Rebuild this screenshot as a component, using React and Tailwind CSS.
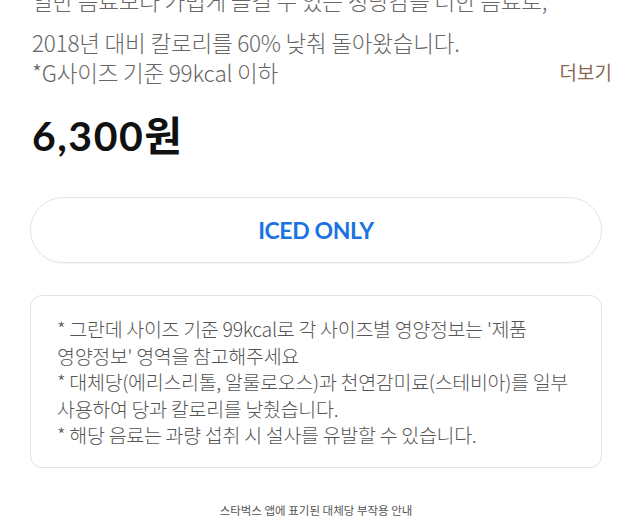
export default function App() {
  const kr = "font-['Noto_Sans_CJK_KR',sans-serif]"

  return (
    <div className={`w-[632px] h-[532px] overflow-hidden bg-white break-keep ${kr}`}>
      {/* description */}
      <div className="relative px-[32px]">
        <div className="h-[20px] overflow-hidden">
          <p className="-mt-[15px] text-[22.5px] leading-[30px] font-light text-[#666] tracking-[-0.2px] whitespace-nowrap">
            일반 음료보다 가볍게 즐길 수 있는 청량감을 더한 음료로,
          </p>
        </div>
        <p className="mt-[7px] text-[22.5px] leading-[30px] font-light text-[#666] tracking-[-0.2px]">
          2018년 대비 칼로리를 60% 낮춰 돌아왔습니다.
        </p>
        <div className="flex items-center justify-between">
          <p className="text-[22.5px] leading-[30px] font-light text-[#666] tracking-[-0.2px]">
            *G사이즈 기준 99kcal 이하
          </p>
          <span className="mr-[-12px] text-[19px] leading-[30px] text-[#8b6a52]">더보기</span>
        </div>
      </div>

      {/* price */}
      <div className="mt-[25px] px-[32px]">
        <p className="font-['Lato','Noto_Sans_CJK_KR',sans-serif] text-[41px] leading-[48px] font-bold text-[#111] tracking-[1.5px]">
          6,300원
        </p>
      </div>

      {/* option */}
      <div className="mt-[37px] px-[30px]">
        <div className="flex h-[66px] items-center justify-center rounded-full border border-[#e3e3e3] shadow-[0_1px_2px_rgba(0,0,0,0.04)]">
          <span className="font-['Lato',sans-serif] text-[23px] font-bold text-[#1a73e0] tracking-[-0.4px]">
            ICED ONLY
          </span>
        </div>
      </div>

      {/* notice */}
      <div className="mt-[32px] px-[30px]">
        <div className="rounded-[12px] border border-[#e3e3e3] pl-[26px] pr-[22px] pt-[20px] pb-[18px] text-[19.5px] leading-[26.5px] font-light text-[#555] tracking-[-0.3px]">
          <p>* 그란데 사이즈 기준 99kcal로 각 사이즈별 영양정보는 '제품 영양정보' 영역을 참고해주세요</p>
          <p>* 대체당(에리스리톨, 알룰로오스)과 천연감미료(스테비아)를 일부 사용하여 당과 칼로리를 낮췄습니다.</p>
          <p>* 해당 음료는 과량 섭취 시 설사를 유발할 수 있습니다.</p>
        </div>
      </div>

      {/* caption */}
      <p className="mt-[34px] text-center text-[11.5px] text-[#555]">스타벅스 앱에 표기된 대체당 부작용 안내</p>
    </div>
  )
}
